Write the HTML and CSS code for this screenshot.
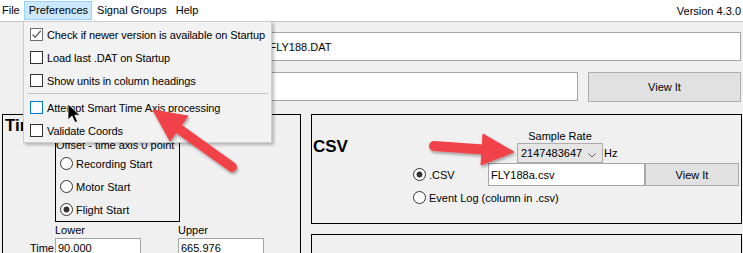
FILE: index.html
```html
<!DOCTYPE html>
<html lang="en">
<head>
    <meta charset="UTF-8">
    <meta name="viewport" content="width=device-width, initial-scale=1.0">
    <title>Flight Data Viewer</title>
    <link rel="stylesheet" href="styles.css">
</head>
<body>
    <div class="menubar">
        <span class="menu-item first">File</span>
        <span class="menu-item active">Preferences</span>
        <span class="menu-item">Signal Groups</span>
        <span class="menu-item">Help</span>
        <span class="version">Version 4.3.0</span>
    </div>

    <div class="main">
        <div class="row file-row">
            <div class="textbox path-box">C:\Logs\Flights\FLY188.DAT</div>
        </div>
        <div class="row out-row">
            <div class="textbox out-box"></div>
            <div class="btn view-btn">View It</div>
        </div>

        <div class="panels">
            <div class="group time-group">
                <div class="group-title">Time</div>
                <div class="offset-box">
                    <div class="offset-label">Offset - time axis 0 point</div>
                    <div class="radio"><span class="radio-dot"></span>Recording Start</div>
                    <div class="radio"><span class="radio-dot"></span>Motor Start</div>
                    <div class="radio"><span class="radio-dot on"></span>Flight Start</div>
                </div>
                <div class="range">
                    <span></span>
                    <span>Lower</span>
                    <span></span>
                    <span>Upper</span>
                    <span class="range-label">Time</span>
                    <div class="textbox small-box">90.000</div>
                    <span></span>
                    <div class="textbox small-box">665.976</div>
                </div>
            </div>

            <div class="right-col">
                <div class="group csv-group">
                    <div class="csv-top">
                        <div class="group-title csv-title">CSV</div>
                        <div class="rate">
                            <div class="rate-label">Sample Rate</div>
                            <div class="rate-row">
                                <div class="combo">
                                    <span>2147483647</span>
                                    <svg class="chevron" width="8" height="5" viewBox="0 0 8 5">
                                        <path d="M0.5 0.5 L4 4 L7.5 0.5" fill="none" stroke="#606060" stroke-width="1"/>
                                    </svg>
                                </div>
                                <span class="hz">Hz</span>
                            </div>
                        </div>
                    </div>
                    <div class="csv-row">
                        <div class="radio csv-radio"><span class="radio-dot on"></span>.CSV</div>
                        <div class="textbox csv-box">FLY188a.csv</div>
                        <div class="btn csv-btn">View It</div>
                    </div>
                    <div class="csv-row">
                        <div class="radio csv-radio wide"><span class="radio-dot"></span>Event Log (column in .csv)</div>
                    </div>
                </div>
                <div class="group empty-group"></div>
            </div>
        </div>
    </div>

    <!-- open Preferences menu -->
    <div class="dropdown">
        <div class="drop-item">
            <span class="check checked">
                <svg width="11" height="11" viewBox="0 0 11 11">
                    <path d="M1.5 5.5 L4.2 8.2 L9.8 1.8" fill="none" stroke="#606060" stroke-width="1.3"/>
                </svg>
            </span>
            Check if newer version is available on Startup
        </div>
        <div class="drop-item"><span class="check"></span>Load last .DAT on Startup</div>
        <div class="drop-item"><span class="check"></span>Show units in column headings</div>
        <div class="separator"></div>
        <div class="drop-item hover"><span class="check"></span>Attempt Smart Time Axis processing</div>
        <div class="drop-item"><span class="check"></span>Validate Coords</div>
    </div>

    <!-- screenshot annotations -->
    <svg class="annotations" width="743" height="253" viewBox="0 0 743 253">
        <defs>
            <filter id="shadow" x="-20%" y="-20%" width="140%" height="140%">
                <feDropShadow dx="1" dy="2" stdDeviation="1.6" flood-color="#000" flood-opacity="0.35"/>
            </filter>
        </defs>
        <g filter="url(#shadow)" fill="#f2434a" stroke="#f2434a">
            <line x1="232" y1="167" x2="179" y2="129" stroke-width="10" stroke-linecap="round"/>
            <polygon points="153,110 188,116 170,141" stroke-width="1" stroke-linejoin="round"/>
            <line x1="434" y1="146" x2="483" y2="149.5" stroke-width="10" stroke-linecap="round"/>
            <polygon points="514,152 483,134 481,165" stroke-width="1" stroke-linejoin="round"/>
        </g>
        <path d="M68 104 L68 120 L72 116 L75 122.5 L77.5 121.5 L74.8 115.2 L80 115.2 Z" fill="#000" stroke="#fff" stroke-width="0.8"/>
    </svg>
</body>
</html>
```

FILE: styles.css
```css
* {
    box-sizing: border-box;
}

body {
    margin: 0;
    width: 743px;
    height: 253px;
    overflow: hidden;
    position: relative;
    background: #f0f0f0;
    font-family: "Liberation Sans", Arial, sans-serif;
    font-size: 11px;
    color: #000;
}

/* menu bar */

.menubar {
    height: 22px;
    background: #fff;
    border-bottom: 1px solid #c4c4c4;
    display: flex;
    align-items: center;
}

.menu-item {
    height: 19px;
    line-height: 17px;
    padding: 0 3px 0 4px;
    border: 1px solid transparent;
}

.menu-item.first {
    padding-left: 1px;
}

.menu-item.active {
    background: #cce8ff;
    border-color: #99d1ff;
}

.version {
    margin-left: auto;
    padding-right: 2px;
}

/* main form */

.main {
    padding: 10px 0 0 2px;
}

.row {
    display: flex;
    align-items: flex-start;
}

.out-row {
    margin-top: 11px;
}

.textbox {
    background: #fff;
    border: 1px solid #a5a5a5;
    padding-left: 2px;
    display: flex;
    align-items: center;
    white-space: nowrap;
    overflow: hidden;
}

.path-box {
    margin-left: 188px;
    width: 551px;
    height: 29px;
}

.out-box {
    margin-left: 188px;
    width: 388px;
    height: 29px;
}

.btn {
    background: #e1e1e1;
    border: 1px solid #adadad;
    display: flex;
    align-items: center;
    justify-content: center;
}

.view-btn {
    margin-left: 10px;
    width: 153px;
    height: 30px;
}

.panels {
    display: flex;
    margin-top: 12px;
}

.group {
    border: 1px solid #000;
}

.group-title {
    font-size: 17px;
    font-weight: bold;
    line-height: 20px;
}

/* time group */

.time-group {
    width: 299px;
    height: 170px;
}

.time-group .group-title {
    margin-top: 1px;
    padding-left: 2px;
}

.offset-box {
    margin: 0 0 0 52px;
    width: 125px;
    height: 86px;
    border: 1px solid #000;
}

.offset-label {
    padding-top: 2px;
    line-height: 13px;
    white-space: nowrap;
}

.radio {
    display: flex;
    align-items: center;
    height: 23px;
    padding-left: 4px;
    white-space: nowrap;
}

.radio-dot {
    width: 13px;
    height: 13px;
    border: 1px solid #333;
    border-radius: 50%;
    background: #fff;
    margin-right: 3px;
    flex: none;
}

.radio-dot.on {
    background: radial-gradient(circle, #333 0, #333 2.7px, #fff 3.3px);
}

.range {
    display: grid;
    grid-template-columns: 52px 86px 37px 86px;
    grid-template-rows: 13px 21px;
    row-gap: 1px;
    margin-top: 2px;
    line-height: 13px;
}

.range-label {
    text-align: right;
    padding-right: 1px;
    align-self: center;
}

.small-box {
    height: 21px;
}

/* csv group */

.right-col {
    width: 431px;
    margin-left: 10px;
}

.csv-group {
    height: 110px;
}

.csv-top {
    display: flex;
    height: 48px;
}

.csv-title {
    width: 205px;
    margin-top: 22px;
    padding-left: 1px;
}

.rate {
    margin-top: 15px;
}

.rate-label {
    width: 86px;
    text-align: center;
    line-height: 13px;
}

.rate-row {
    display: flex;
    align-items: center;
}

.combo {
    width: 86px;
    height: 20px;
    background: #e5e5e5;
    border: 1px solid #adadad;
    display: flex;
    align-items: center;
    padding-left: 3px;
}

.chevron {
    margin-left: auto;
    margin-right: 6px;
    margin-top: 4px;
}

.hz {
    margin-left: 1px;
}

.csv-row {
    display: flex;
    align-items: center;
    height: 23px;
}

.csv-radio {
    margin-left: 101px;
    width: 75px;
    padding-left: 0;
}

.csv-radio.wide {
    width: auto;
}

.csv-box {
    width: 157px;
    height: 23px;
}

.csv-btn {
    width: 94px;
    height: 23px;
}

.empty-group {
    margin-top: 10px;
    height: 60px;
}

/* dropdown menu */

.dropdown {
    position: absolute;
    left: 23px;
    top: 21px;
    width: 249px;
    height: 122px;
    background: #f2f2f2;
    border: 1px solid #cccccc;
    box-shadow: 2px 2px 3px rgba(0, 0, 0, 0.25);
    padding: 1px 2px 0 2px;
    letter-spacing: -0.1px;
}

.drop-item {
    display: flex;
    align-items: center;
    height: 23px;
    padding-left: 4px;
    white-space: nowrap;
}

.check {
    width: 13px;
    height: 13px;
    border: 1px solid #333;
    background: #fff;
    margin-right: 4px;
    display: flex;
    align-items: center;
    justify-content: center;
    flex: none;
}

.check.checked {
    border-color: #6d6d6d;
}

.drop-item.hover .check {
    border-color: #0078d7;
}

.separator {
    height: 3px;
    margin: 0 1px;
    border-top: 1px solid #c6c6c6;
    margin-top: 1px;
}

.annotations {
    position: absolute;
    left: 0;
    top: 0;
    pointer-events: none;
}
```
